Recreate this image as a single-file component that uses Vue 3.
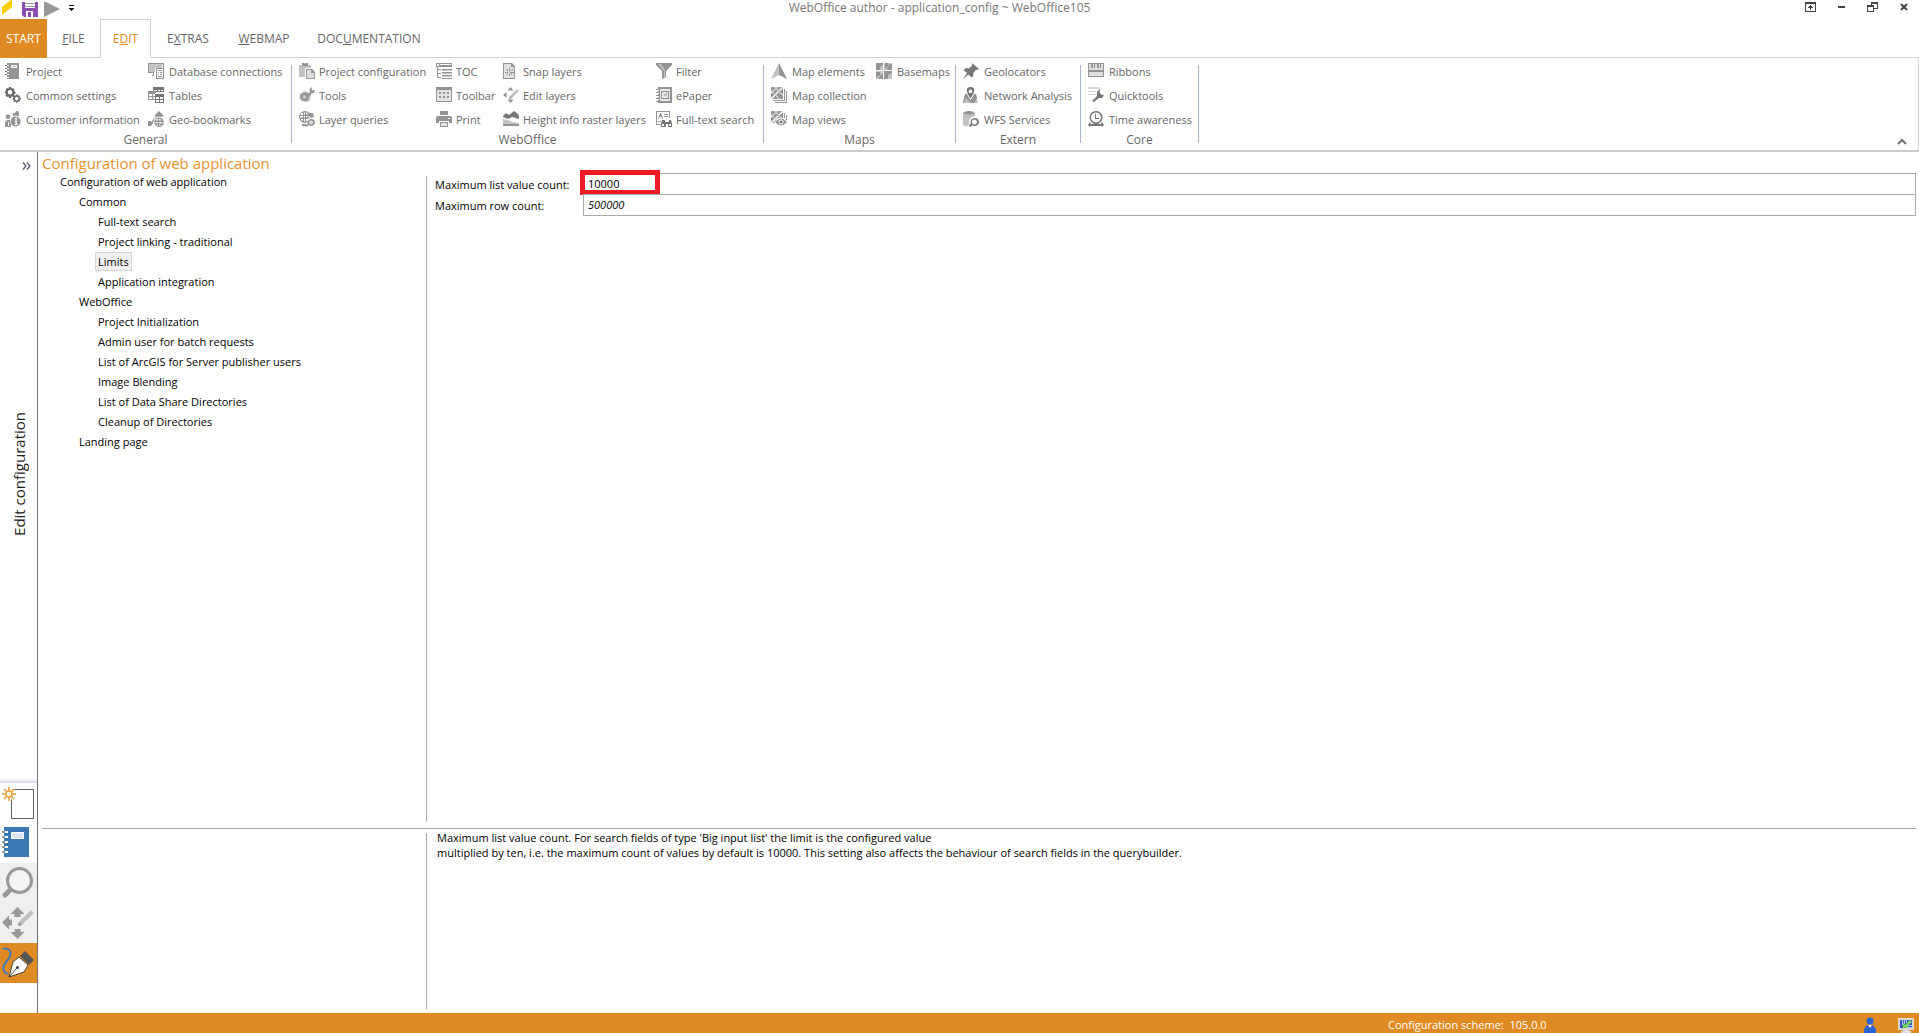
<script setup>
import { ref } from 'vue'

const G = '#939393'
const D = '#767676'
const L = '#c2c2c2'
const W = '#ffffff'

// every icon is a list of [fill, path] on a 16x16 grid
const icons = {
  project: [[G, 'M2 0h12v16H2z'], [W, 'M6 2h6v3H6z'], [L, 'M7 3h4v1H7z'], [W, 'M1 2h3v1H1zM1 5h3v1H1zM1 8h3v1H1zM1 11h3v1H1zM1 14h3v1H1z'], [D, 'M0 2h2v1H0zM0 5h2v1H0zM0 8h2v1H0zM0 11h2v1H0z']],
  gears: [['#686868', 'M4 0h2l.5 1.5 1.5-.5 1.5 1.5L9 4l1.500.7v2L9 7.200l.5 1.500L8 10l-1.500-.7L6 11H4l-.6-1.700L2 10 .5 8.500 1.200 7 0 6.300v-2L1.200 4 .5 2.500 2 1l1.500.6zM5 3a2.300 2.300 0 1 0 .1 0z'], ['#686868', 'M11 7.500h1.500l.3 1 1.200-.3 1 1-.4 1.200 1.200.5v1.500l-1.200.5.4 1-1 1.200-1.200-.5-.4 1.200H11l-.5-1.200-1.200.4-1-1.100.4-1.100-1.100-.5v-1.400l1.100-.5-.4-1.100 1-1 1.200.4zM11.700 9.800a1.800 1.800 0 1 0 .1 0z']],
  customer: [[G, 'M3 3.500a2.300 2.300 0 1 1 0 4.600 2.300 2.300 0 1 1 0-4.600zM8 2h2l1-2h2l1 2v3H8zM0 11l2-2h4v7H0z'], [W, 'M3 11h1v4H3z'], [W, 'M10.500 4.500a5.700 5.700 0 1 0 .1 0z'], [G, 'M10.500 5.500a5 5 0 1 0 .1 0z'], [W, 'M10 7h2v1.500h-2zM9.500 9.500H12V13h1v1H9.500v-1h1v-2.500h-1z']],
  database: [[G, 'M0 0h16v5h-1V1.500H1.500V9H6v4H4v-1h1v-2H0z'], [L, 'M2 2h12v3H7v4H2z'], [W, 'M7 5h9v11H7z'], [G, 'M8 5h8v11H8zM9 6v9h6V6z'], [G, 'M10 7h4v1h-4zM10 9h1v1h-1zM12 9h2v1h-2zM10 11h1v1h-1zM12 11h2v1h-2zM10 13h4v1h-4z']],
  tables: [[D, 'M5 0h11v5H5z'], [W, 'M6 3h3v1H6zM10 3h2v1h-2zM13 3h2v1h-2z'], [G, 'M0 4h8v9H0z'], [W, 'M1 7h3v2H1zM5 7h2v2H5zM1 10h3v2H1zM5 10h2v2H5zM7 6h9v10H7z'], [D, 'M7 7h9v9H7z'], [W, 'M8 10h3v2H8zM12 10h3v2h-3zM8 13h3v2H8zM12 13h3v2h-3z']],
  geobookmark: [[G, 'M11 0l5 5h-2v1H9L3 15H0l8-10H6z'], [G, 'M0 10h3v5H0z'], [W, 'M11 5.500a5.500 5.500 0 1 0 .1 0z'], [G, 'M11 6.500a4.700 4.700 0 1 0 .1 0z'], [W, 'M8.500 8h1.500v1.500H8zM11 8h1.500l.5 1.500h-2zM7.500 11H10v1.200H7.700zM11 11h3.500l-.3 1.200H11zM9 13.500h1v1H9zM11 13.500h2l-1 1.200h-1z']],
  projectconfig: [[L, 'M0 2h12v12H0z'], [G, 'M3 0h6v3H3z'], [L, 'M5 0h2v1H5z'], [W, 'M6 5h7l3 3v8H6z'], [G, 'M7 6h6l3 3v7H7zM8 7v8h7v-5h-3V7z'], ['#dedede', 'M8 7h4v3h3v5H8z']],
  tools: [[L, 'M5 4l2 1 2-.5 1 2 2 .5v2l-1 1.500.7 2-2 1.200L8.500 15H6l-1.500-1.500-2 .5-1-2L0 11l1-2V6.500l2 .2z'], [G, 'M5.500 5.500a4.300 4.300 0 1 0 .1 0zM5.500 8a2 2 0 1 1-.1 0z'], [G, 'M8 8l3-3-.5-3L13 0l-.5 2.500 1 1L16 3l-1 3-2.500.5L9 10z']],
  layerqueries: [[G, 'M6 0a6 6 0 1 0 .1 0z'], [W, 'M2 2h2v2H1.500zM5 1.500h1v2H5zM7 1.500h1.500v2H7zM1 5h3v1.500H1zM5 5h1v1.500H5zM7 5h1.500v1.500H7zM2 8h2v1.500H2zM5 8h1v2.500H5zM7 8h2v2H7zM9.500 5H11v1.500H9.500z'], [G, 'M9 2h5l1 4-1 2-3-2zM3 13h4v2H3z'], [W, 'M12 6.500a4.500 4.500 0 0 0-3.500 7l-1.500 2L9 16l2-1.500a4.500 4.500 0 1 0 1-8z'], [G, 'M12 8a3.500 3.500 0 0 0-3.300 5L6 15l1 1 3-2a3.500 3.500 0 1 0 2-6z'], ['#dedede', 'M12 9.500a2 2 0 1 0 .1 0z']],
  toc: [[G, 'M0 0h16v4H0zM6 6h10v1.500H6zM6 9h10v1.500H6zM6 12h10v1.500H6zM6 15h10v1H6z'], [W, 'M1 1h2v2H1zM4 1h11v1H4z'], [G, 'M1 4h1v10h3v1H1zM2 6h3v1H2zM2 10h3v1H2z']],
  toolbar: [[G, 'M0 0h16v15H0z'], ['#e4e4e4', 'M1 3h14v11H1z'], [G, 'M3 5h2v2H3zM7 5h2v2H7zM11 5h2v2h-2zM3 9h2v2H3zM7 9h2v2H7zM11 9h2v2h-2z']],
  print: [[G, 'M4 0h8v4H4zM1 5h14l1 2v5h-3v-2H3v2H0V7z'], [G, 'M4 11h8v5H4z'], ['#e4e4e4', 'M5 12h6v3H5z'], [W, 'M3 4h10v1H3zM12 7h2v1h-2z']],
  snap: [[G, 'M0 0h9l3 3v13H0z'], ['#e2e2e2', 'M1 1h7v3h3v11H1z'], [G, 'M6 5h1v3H6zM6 11h1v2H6zM2 9h3v1H2zM8 9h3v1H8zM3 6h1l1 1v1H4zM9 6h1v1L9 8H8zM3 12l2-2v1l-1 1zM6 8l4 3-2 .5z']],
  editlayers: [[G, 'M7.500 0l3 3.500h-6zM0 8l3.500-3v6zM7.500 16l-3-3.500h6z'], [L, 'M14 2l2 2-7 7-3 1 1-3z'], [G, 'M6 12l1-3 2 2z']],
  heightinfo: [[D, 'M0 5l3-3 3 2 5-4 4 3 1 2v3L9 6 5 8 0 6z'], [L, 'M0 8l5 1 4 2 7 1v2H0z'], [G, 'M0 13h16v2H0z']],
  filter: [[G, 'M0 0h16v2l-6 6v6l-4 2V8L0 2z'], [L, 'M2 1h3l4 6v7l-1 .5V8z']],
  epaper: [[G, 'M2 0h14v16H2zM4 2v12h10V2z'], ['#e4e4e4', 'M4 2h10v12H4z'], [G, 'M5 4h8v8H5zM6 5v6h6V5z'], [G, 'M8 8l3-2v1L9 9zM0 2h3v1H0zM0 5h3v1H0zM0 8h3v1H0zM0 11h3v1H0zM0 14h3v1H0z'], [W, 'M2 3h1v1H2zM2 6h1v1H2zM2 9h1v1H2zM2 12h1v1H2z']],
  fulltext: [[G, 'M0 0h14v7h-1V1H1v12h4v1H0z'], [G, 'M4 2h1l2 6H6L5.500 6h-2L3 8H2zM8 3h4v1H8zM8 5h4v1H8zM2 10h4v1H2z'], [W, 'M5 8h11v8H5z'], [D, 'M6 9h3v2h4V9h2l1 4v3h-4v-3h-2v3H5v-3z'], [W, 'M6 13h2v2H6zM13 13h2v2h-2z']],
  mapelements: [[L, 'M8 0v12l-8 4z'], [G, 'M8 0l8 16-8-4z']],
  basemaps: [[L, 'M0 0h16v16H0z'], [G, 'M0 0h7v2L4 4v3H0zM8 8h8v2l-4 2v4H8z'], [G, 'M9 0h3v3l-3 3zM13 1h3v6h-5zM0 9h4v3l-4 2zM3 14l4-4v6H3z'], [W, 'M7 0h1v16H7zM0 7h16v1H0z']],
  mapcollection: [[G, 'M0 0h12v12H0z'], [W, 'M0 3l9 9H8L0 4zM4 0l8 8v1L3 0zM0 11L11 0h1v1L1 12H0zM0 6l6-6h1L0 7z'], [G, 'M13 2h1v12H2v-1h11zM15 4h1v12H4v-1h11z']],
  mapviews: [[G, 'M0 0h12v12H0z'], [W, 'M0 3l9 9H8L0 4zM4 0l8 8v1L3 0zM0 11L11 0h1v1L1 12H0zM0 6l6-6h1L0 7z'], [G, 'M13 2h1v5h-1zM15 4h1v5h-1z'], [W, 'M3 11l4-4h6l3 4-3 5H7z'], [G, 'M4 11q6-7 12 0-6 7-12 0z'], [W, 'M10 8.500a2.500 2.500 0 1 0 .1 0z'], [D, 'M10 9.500a1.500 1.500 0 1 0 .1 0z']],
  geolocators: [[D, 'M9 0l7 6-2 1-1-.3-3 4 .5 2-2 1.800-3-3L0 16l4-6-3.500-3L3 5l2.500.5L9 3z']],
  network: [[L, 'M2 7h11l2 9H0z'], [G, 'M2 7h3l3 6 3-6h2l1 4-3 5H8l-5-5-2 5H0z'], [W, 'M7.500 0C1 0 3 7 7.500 13 12 7 14 0 7.500 0z'], [D, 'M7.500 0C2 0 3 5 7.500 11.500 12 5 13 0 7.500 0zM7.500 2.500a1.800 1.800 0 1 1-.1 0z']],
  wfs: [[L, 'M0 2q6-4 12 0v12q-6 3-12 0z'], [G, 'M0 2q6-4 12 0-6 3-12 0z'], [W, 'M11 5.500a5 5 0 0 0-4.500 7L5 15l2 1 2-1.500a5 5 0 1 0 2-9z'], [D, 'M11.500 7a4 4 0 0 0-3.600 5.500L6 14.500 7.300 16l2-2a4 4 0 1 0 2.200-7zM11.500 8.500a2.500 2.500 0 1 1-.1 0z']],
  ribbons: [[G, 'M0 0h16v14H0z'], ['#dedede', 'M1 1h14v6H1zM1 9h14v4H1z'], [G, 'M3 1h2v4H3zM6 1h1v4H6zM9 1h2v4H9zM12 1h1v4h-1z']],
  quicktools: [['#d8d8d8', 'M0 0h12v2H0zM0 4h9v1H0zM0 7h8v1H0z'], [D, 'M4 14l5-5V5l3-3-.3 4 1.500 1.500L16 8l-2 3h-3l-5 4z']],
  time: [[D, 'M8 0a6.500 6.500 0 1 0 .1 0zM8 1.500a5 5 0 1 1-.1 0z'], [D, 'M7 3h1v4h3v1H7zM2 11l1 2h10l1-2 2 3-2 2v-1H2v1l-2-2z']]
}

const tabs = [
  { pre: '', key: '', post: 'START' },
  { pre: '', key: 'F', post: 'ILE' },
  { pre: 'E', key: 'D', post: 'IT' },
  { pre: 'E', key: 'X', post: 'TRAS' },
  { pre: '', key: 'W', post: 'EBMAP' },
  { pre: 'DOC', key: 'U', post: 'MENTATION' }
]
const activeTab = ref(2)

const groups = [
  {
    name: 'General',
    items: [
      ['project', 'Project'], ['gears', 'Common settings'], ['customer', 'Customer information'],
      ['database', 'Database connections'], ['tables', 'Tables'], ['geobookmark', 'Geo-bookmarks']
    ]
  },
  {
    name: 'WebOffice',
    items: [
      ['projectconfig', 'Project configuration'], ['tools', 'Tools'], ['layerqueries', 'Layer queries'],
      ['toc', 'TOC'], ['toolbar', 'Toolbar'], ['print', 'Print'],
      ['snap', 'Snap layers'], ['editlayers', 'Edit layers'], ['heightinfo', 'Height info raster layers'],
      ['filter', 'Filter'], ['epaper', 'ePaper'], ['fulltext', 'Full-text search']
    ]
  },
  {
    name: 'Maps',
    items: [
      ['mapelements', 'Map elements'], ['mapcollection', 'Map collection'], ['mapviews', 'Map views'],
      ['basemaps', 'Basemaps']
    ]
  },
  {
    name: 'Extern',
    items: [['geolocators', 'Geolocators'], ['network', 'Network Analysis'], ['wfs', 'WFS Services']]
  },
  {
    name: 'Core',
    items: [['ribbons', 'Ribbons'], ['quicktools', 'Quicktools'], ['time', 'Time awareness']]
  }
]

const tree = [
  { label: 'Configuration of web application', level: 0 },
  { label: 'Common', level: 1 },
  { label: 'Full-text search', level: 2 },
  { label: 'Project linking - traditional', level: 2 },
  { label: 'Limits', level: 2 },
  { label: 'Application integration', level: 2 },
  { label: 'WebOffice', level: 1 },
  { label: 'Project Initialization', level: 2 },
  { label: 'Admin user for batch requests', level: 2 },
  { label: 'List of ArcGIS for Server publisher users', level: 2 },
  { label: 'Image Blending', level: 2 },
  { label: 'List of Data Share Directories', level: 2 },
  { label: 'Cleanup of Directories', level: 2 },
  { label: 'Landing page', level: 1 }
]
const selected = ref('Limits')

const listCount = ref('10000')
const rowCount = ref('500000')
</script>

<template>
  <div class="app">
    <header class="titlebar">
      <div class="quick">
        <svg class="logo" width="14" height="15" viewBox="0 0 14 15"><path fill="#ffd000" d="M2 7l10-8v8L2 15z" /></svg>
        <button type="button" aria-label="Save">
          <svg width="16" height="15" viewBox="0 0 16 15">
            <path fill="#8a4fb0" d="M0 0h16v15H2l-2-2z" />
            <path fill="#fff" d="M3 0h10v6H3zM4 9h9v6H4z" />
            <path fill="#999" d="M3 1h10v1H3zM3 4h10v1H3z" />
            <path fill="#8a4fb0" d="M6 10h3v5H6zM11 9h2v6h-2z" />
          </svg>
        </button>
        <button type="button" aria-label="Run">
          <svg width="16" height="15" viewBox="0 0 16 15"><path fill="#989898" d="M0-1l16 8L0 15z" /></svg>
        </button>
        <button type="button" class="more" aria-label="Customize">
          <svg width="5" height="6" viewBox="0 0 5 6"><path d="M0 0h5v1H0zM0 3h5v1H4v1H3v1H2V5H1V4H0z" /></svg>
        </button>
      </div>
      <h1>WebOffice author - application_config ~ WebOffice105</h1>
      <div class="window">
        <button type="button" aria-label="Ribbon options">
          <svg width="11" height="10" viewBox="0 0 11 10"><path fill="#444" fill-rule="evenodd" d="M0 0h11v10H0zM1 2v7h9V2zM5 3h1v1h1v1h1v1H6v2H5V6H3V5h1V4h1z" /></svg>
        </button>
        <button type="button" aria-label="Minimize">
          <svg width="7" height="10" viewBox="0 0 7 10"><path fill="#444" d="M0 4h7v2H0z" /></svg>
        </button>
        <button type="button" aria-label="Restore">
          <svg width="11" height="10" viewBox="0 0 11 10"><path fill="#444" fill-rule="evenodd" d="M4 0h7v7H7v3H0V3h4zM5 2v1h2v3h3V2zM1 5v4h5V5z" /></svg>
        </button>
        <button type="button" aria-label="Close">
          <svg width="8" height="10" viewBox="0 0 8 10"><path stroke="#444" stroke-width="2" d="M1 2l6 6M7 2L1 8" /></svg>
        </button>
      </div>
    </header>

    <nav class="tabs">
      <button
        v-for="(tab, i) in tabs"
        :key="i"
        type="button"
        :class="{ start: i === 0, active: i === activeTab }"
        @click="activeTab = i"
      >{{ tab.pre }}<u>{{ tab.key }}</u>{{ tab.post }}</button>
      <span class="rest"></span>
    </nav>

    <section class="ribbon">
      <div v-for="group in groups" :key="group.name" class="group" :class="group.name.toLowerCase()">
        <div class="commands">
          <button v-for="[icon, label] in group.items" :key="label" type="button" class="command">
            <svg width="16" height="16" viewBox="0 0 16 16">
              <path v-for="([fill, d], i) in icons[icon]" :key="i" :fill="fill" fill-rule="evenodd" :d="d" />
            </svg>
            {{ label }}
          </button>
        </div>
        <div class="group-name">{{ group.name }}</div>
      </div>
      <button type="button" class="collapse" aria-label="Collapse ribbon">
        <svg width="10" height="7" viewBox="0 0 10 7"><path fill="none" stroke="#707070" stroke-width="2" d="M1 6l4-4 4 4" /></svg>
      </button>
    </section>

    <main class="body">
      <aside class="rail">
        <button type="button" class="expand" aria-label="Expand">
          <svg width="9" height="8" viewBox="0 0 9 8"><path fill="none" stroke="#555566" stroke-width="1.300" d="M1 .5L4 4 1 7.500M5 .5L8 4 5 7.500" /></svg>
        </button>
        <div class="rail-title"><span>Edit configuration</span></div>
        <div class="rail-split"></div>
        <button type="button" class="tool" aria-label="New">
          <svg width="37" height="40" viewBox="0 0 37 40">
            <path fill="#fff" stroke="#606060" d="M11.500 6.500h22v29h-22z" />
            <circle cx="9" cy="11" r="6" fill="#fff" />
            <path stroke="#e8a23c" stroke-width="1.600" d="M9 4v14M2 11h14M4 6l10 10M14 6L4 16" />
            <circle cx="9" cy="11" r="3" fill="#fff" stroke="#e8a23c" stroke-width="1.500" />
          </svg>
        </button>
        <button type="button" class="tool" aria-label="Project book">
          <svg width="37" height="40" viewBox="0 0 37 40">
            <path fill="#3c78b4" d="M4 4h25v30H4z" />
            <path fill="#dbe8f2" stroke="#fff" d="M11.500 9.500h12v6h-12z" />
            <path stroke="#fff" stroke-width="2" d="M4 9h4M4 14h4M4 19h4M4 24h4M4 29h4" />
            <path stroke="#999" stroke-width="2" d="M2 9h3M2 14h3M2 19h3M2 24h3M2 29h3" />
          </svg>
        </button>
        <button type="button" class="tool grey" aria-label="Search">
          <svg width="37" height="40" viewBox="0 0 37 40">
            <path stroke="#989898" stroke-width="5" stroke-linecap="round" d="M5 32l7-7" />
            <circle cx="19.500" cy="17.500" r="12" fill="#f4f4f4" stroke="#989898" stroke-width="3" />
          </svg>
        </button>
        <button type="button" class="tool grey" aria-label="Move">
          <svg width="37" height="40" viewBox="0 0 37 40">
            <path fill="#989898" d="M17.500 4l7 7h-4v3h-6v-3h-4zM2 19.500l7-7v4h3v6H9v4zM17.500 36l-7-7h4v-3h6v3h4z" />
            <path fill="#c0c0c0" d="M31 7l3 3-12 12-4 1 1-4z" />
            <path fill="#989898" d="M19 19l3 3-4 1z" />
          </svg>
        </button>
        <button type="button" class="tool current" aria-label="Edit configuration">
          <svg width="37" height="40" viewBox="0 0 37 40">
            <path fill="none" stroke="#3c78b4" stroke-width="2" d="M3 6c5-2 9 2 7 7-2 6-9 8-6 15 1 2 3 3 4 2" />
            <path fill="#555" d="M25 8l9 9-5 5-9-9z" />
            <path fill="#fff" stroke="#444" d="M19 14l9 8-4 7-15 5 4-15z" />
            <path stroke="#444" d="M9 34l8-9" />
            <circle cx="17.500" cy="24.500" r="1.500" fill="#444" />
          </svg>
        </button>
      </aside>

      <div class="workspace">
        <h2>Configuration of web application</h2>
        <div class="upper">
          <ul class="tree">
            <li v-for="node in tree" :key="node.label" :class="'level' + node.level">
              <button
                type="button"
                :class="{ selected: node.label === selected }"
                @click="selected = node.label"
              >{{ node.label }}</button>
            </li>
          </ul>
          <form class="settings" @submit.prevent>
            <label for="list-count">Maximum list value count:</label>
            <div class="field marked"><input id="list-count" v-model="listCount" type="text"></div>
            <label for="row-count">Maximum row count:</label>
            <div class="field"><input id="row-count" v-model="rowCount" type="text" class="default"></div>
          </form>
        </div>
        <div class="lower">
          <p>
            Maximum list value count. For search fields of type 'Big input list' the limit is the configured value<br>
            multiplied by ten, i.e. the maximum count of values by default is 10000. This setting also affects the behaviour of search fields in the querybuilder.
          </p>
        </div>
      </div>
    </main>

    <footer class="status">
      <span class="scheme">Configuration scheme:&nbsp; 105.0.0</span>
      <svg width="12" height="16" viewBox="0 0 12 16">
        <circle cx="6" cy="4" r="3.500" fill="#2c62d0" />
        <path fill="#2c62d0" d="M3 8h6l3 4v4H0v-4z" />
        <path fill="#fff" d="M4 8h4l-2 3z" />
      </svg>
      <svg width="16" height="16" viewBox="0 0 16 16">
        <path fill="#d8d8d0" d="M0 1h16v12H0z" />
        <path fill="#3c50c0" d="M2 3h12v8H2z" />
        <path stroke="#b8c4f0" d="M4.500 3v5M6.500 3v4M8.500 3v3M9 8.500h5M8 10.500h6" />
        <path fill="#70e050" d="M12 3l2 2-5 4 2 1-6 1V6l2 2z" />
        <path fill="#ddd" d="M5 13h6v1h2v2H3v-2h2z" />
      </svg>
    </footer>
  </div>
</template>

<style>
body {
  margin: 0;
}
</style>

<style scoped>
.app {
  display: flex;
  flex-direction: column;
  min-height: 100vh;
  background: #fff;
  font-family: "Open Sans", "Noto Sans", sans-serif;
  font-size: 12px;
  color: #666;
}

button {
  margin: 0;
  padding: 0;
  border: 0;
  background: none;
  font: inherit;
  color: inherit;
  cursor: pointer;
}

svg {
  display: block;
  flex: none;
}

.titlebar {
  display: grid;
  grid-template-columns: 120px 1fr 160px;
  height: 19px;
  overflow: hidden;
}

.titlebar h1 {
  margin: 0;
  font-size: 12px;
  font-weight: 400;
  line-height: 16px;
  text-align: center;
  color: #777;
}

.quick {
  display: flex;
  gap: 6px;
}

.quick .logo {
  margin-right: 2px;
}

.quick .more {
  height: 15px;
  margin-left: 3px;
}

.window {
  display: flex;
  justify-content: flex-end;
  align-items: flex-start;
  gap: 22px;
  padding: 2px 11px 0 0;
}

.tabs {
  display: grid;
  grid-template-columns: 47px 53px 51px 74px 78px 132px 1fr;
  height: 39px;
}

.tabs button,
.tabs .rest {
  border-bottom: 1px solid #d4d4d4;
}

.tabs button.start {
  background: #e08a23;
  border-color: #e08a23;
  color: #fff;
}

.tabs button.active {
  border: 1px solid #d4d4d4;
  border-bottom-color: #fff;
  color: #e08a23;
}

.ribbon {
  position: relative;
  display: flex;
  height: 92px;
  border-right: 1px solid #d4d4d4;
  border-bottom: 2px solid #cbcbcb;
}

.group {
  height: 78px;
  margin-top: 7px;
  border-right: 1px solid #a5b5cb;
}

.commands {
  display: grid;
  grid-template-rows: repeat(3, 24px);
  grid-auto-flow: column;
  height: 66px;
  margin-top: -6px;
  padding-left: 7px;
  font-size: 11px;
}

.general .commands {
  grid-template-columns: 143px 143px;
  padding-left: 5px;
}

.weboffice .commands {
  grid-template-columns: 137px 67px 153px 107px;
}

.maps .commands {
  grid-template-columns: 105px 79px;
}

.extern .commands {
  grid-template-columns: 117px;
}

.core .commands {
  grid-template-columns: 110px;
}

.command {
  display: flex;
  align-items: center;
  gap: 5px;
  height: 24px;
  white-space: nowrap;
}

.weboffice .command {
  gap: 4px;
}

.group-name {
  margin-top: 6px;
  line-height: 18px;
  text-align: center;
}

.collapse {
  position: absolute;
  right: 11px;
  bottom: 5px;
}

.body {
  display: flex;
  flex: 1;
}

.rail {
  display: flex;
  flex-direction: column;
  width: 37px;
  border-right: 1px solid #707070;
  padding-bottom: 30px;
}

.expand {
  align-self: flex-end;
  margin: 10px 6px 0 0;
}

.rail-title {
  display: flex;
  flex: 1;
  align-items: center;
  justify-content: center;
  font-size: 15px;
  color: #222;
}

.rail-title span {
  writing-mode: vertical-rl;
  transform: rotate(180deg);
}

.rail-split {
  height: 5px;
  background: linear-gradient(#fff, #d4d4e8);
}

.tool {
  height: 40px;
}

.tool.grey {
  background: #efefef;
}

.tool.current {
  background: #e08a23;
}

.workspace {
  display: flex;
  flex: 1;
  flex-direction: column;
  padding: 0 3px 4px 4px;
  font-size: 11px;
  color: #000;
}

h2 {
  margin: 0;
  font-size: 15px;
  font-weight: 400;
  line-height: 22px;
  color: #e5922f;
}

.upper {
  display: flex;
  flex: 1;
}

.tree {
  width: 384px;
  margin: 2px 0 6px;
  padding: 0;
  border-right: 1px solid #a8a8a8;
  list-style: none;
}

.tree li {
  display: flex;
  align-items: center;
  height: 20px;
}

.tree li:first-child {
  margin-top: -5px;
}

.tree button {
  padding: 0 2px;
  border: 1px solid transparent;
  line-height: 17px;
}

.tree button.selected {
  border-color: #d4d4d4;
  background: #f0f0f0;
}

.level0 {
  padding-left: 15px;
}

.level1 {
  padding-left: 34px;
}

.level2 {
  padding-left: 53px;
}

.settings {
  display: grid;
  flex: 1;
  grid-template-columns: 148px 1fr;
  grid-template-rows: 21px 22px;
  align-content: start;
  align-items: stretch;
  margin-top: -1px;
  padding-left: 8px;
}

.settings label {
  padding-top: 1px;
  font-weight: 500;
  line-height: 22px;
}

.field {
  position: relative;
  border: 1px solid #a8a8a8;
}

.field.marked {
  border-bottom: 0;
}

.field.marked::after {
  content: "";
  position: absolute;
  top: -4px;
  left: -4px;
  width: 70px;
  height: 15px;
  border: 5px solid #ed1c24;
}

.field input {
  box-sizing: border-box;
  width: 100%;
  height: 19px;
  padding: 0 4px;
  border: 0;
  outline: 0;
  background: none;
  font: inherit;
  color: inherit;
}

.field input.default {
  font-style: italic;
}

.lower {
  display: flex;
  height: 180px;
  border-top: 1px solid #a8a8a8;
}

.lower::before {
  content: "";
  width: 384px;
  margin-top: 4px;
  border-right: 1px solid #a8a8a8;
}

.lower p {
  margin: 1px 0 0 10px;
  line-height: 15px;
}

.status {
  display: flex;
  justify-content: flex-end;
  height: 20px;
  padding-right: 5px;
  background: #e08a23;
  font-size: 11px;
  color: #fff;
}

.status .scheme {
  width: 476px;
  line-height: 24px;
}

.status svg {
  margin-top: 4px;
}

.status svg + svg {
  margin-left: 22px;
}
</style>
